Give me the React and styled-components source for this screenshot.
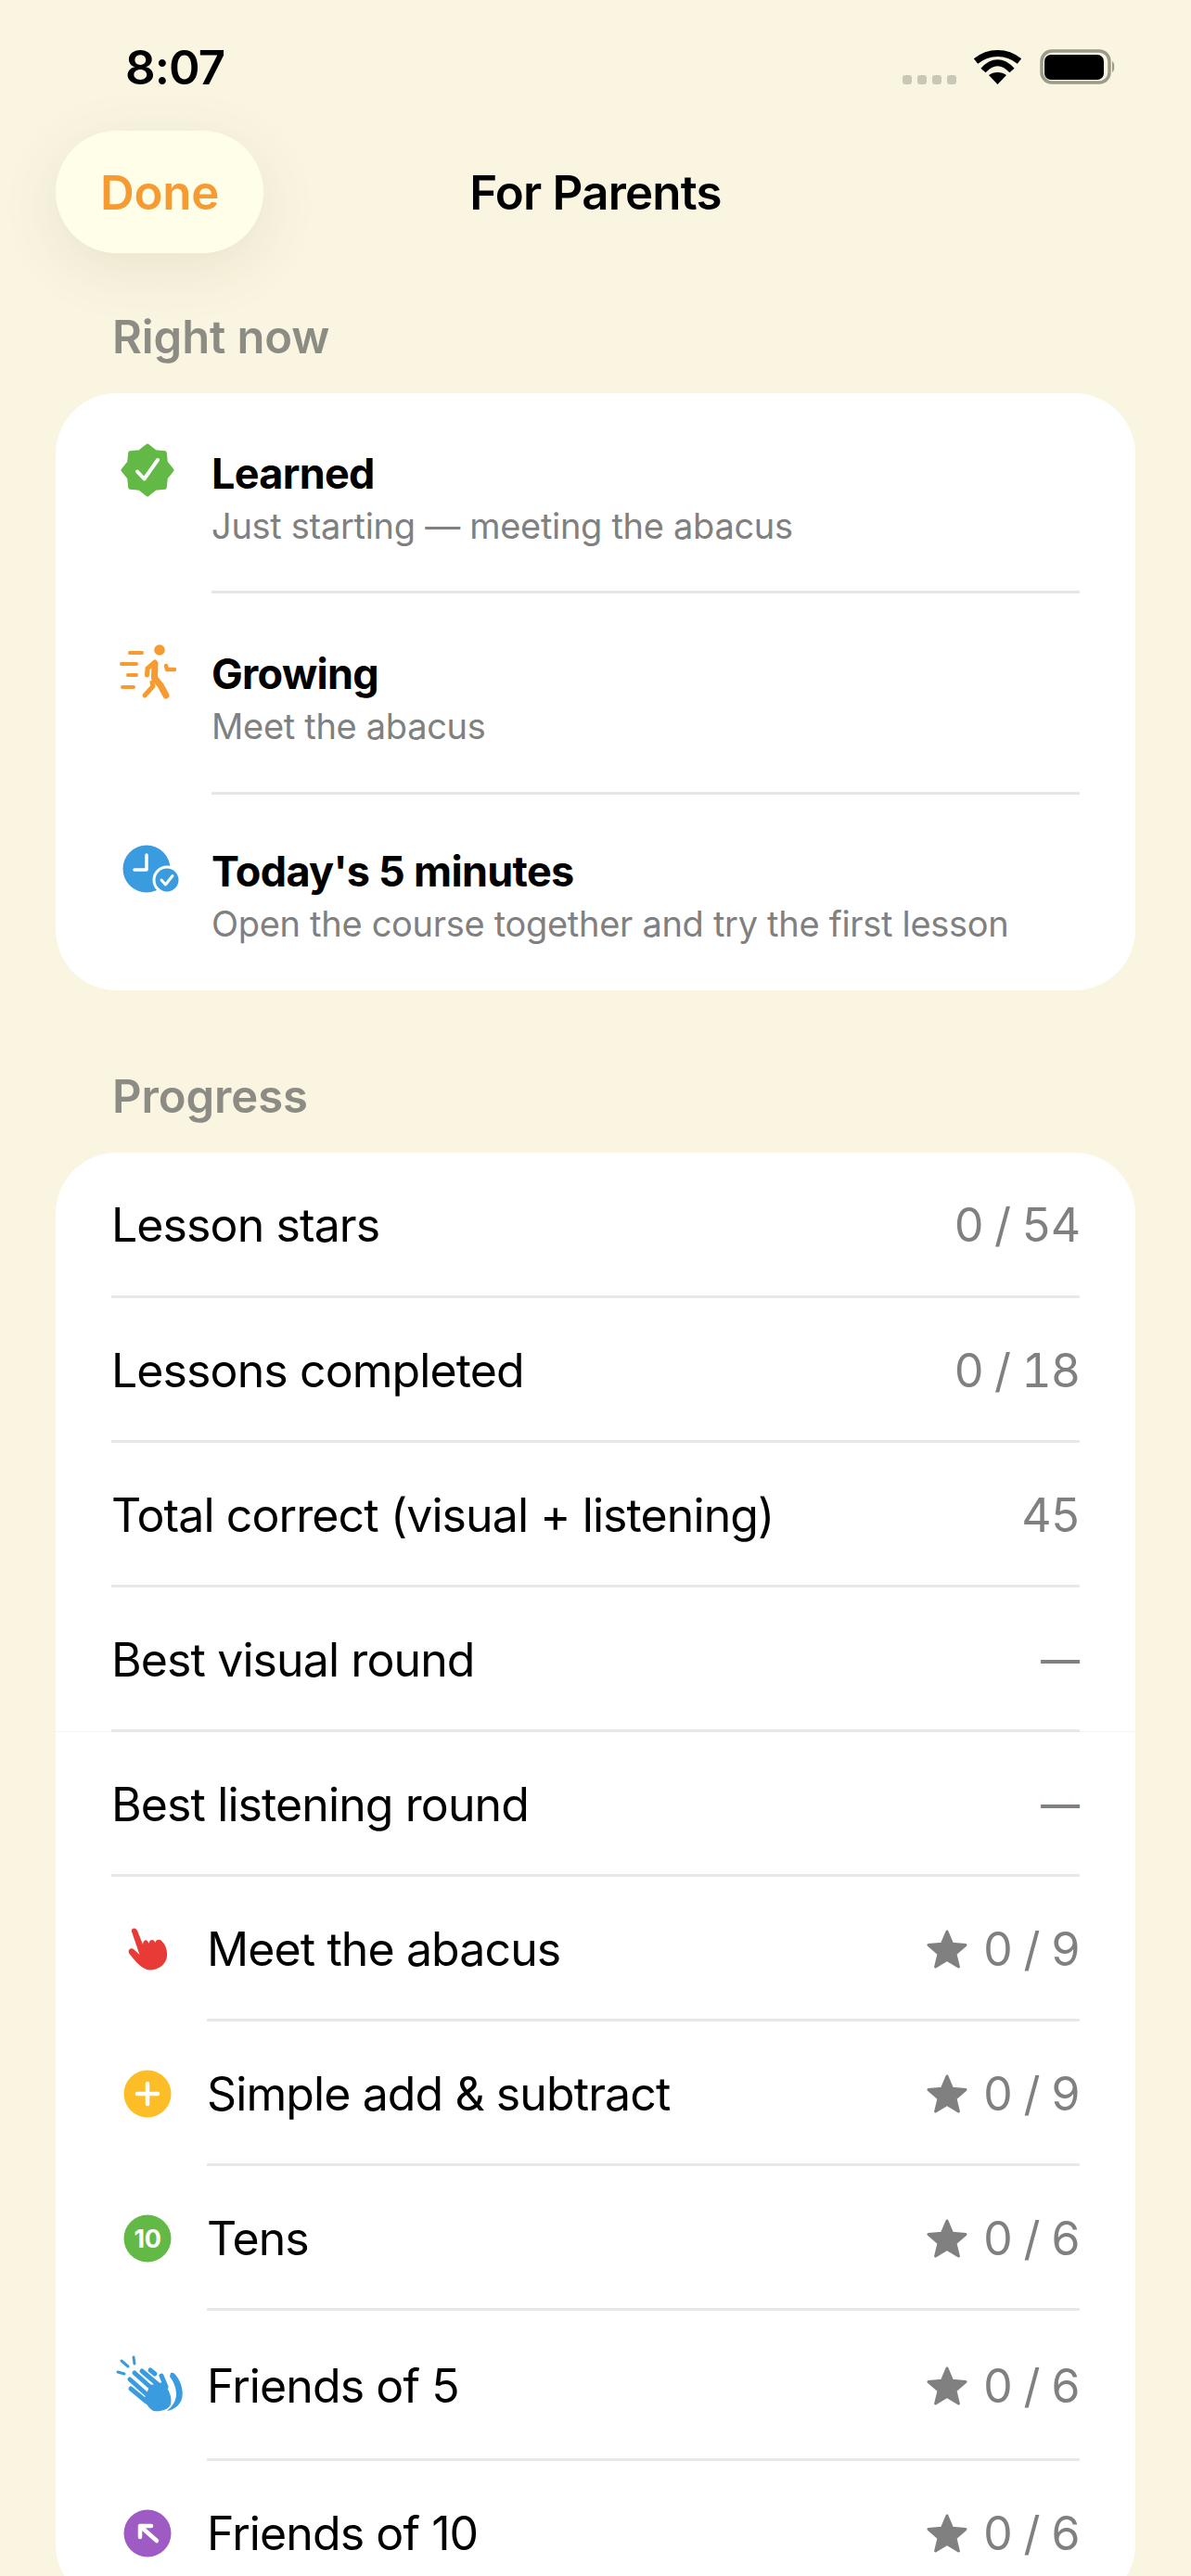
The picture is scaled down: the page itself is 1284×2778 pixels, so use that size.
import React from "react";
import styled, { createGlobalStyle } from "styled-components";

const Global = createGlobalStyle`
  html, body { margin: 0; padding: 0; background: #faf5e1; }
  * { box-sizing: border-box; }
`;

const Page = styled.div`
  width: 1284px;
  height: 2778px;
  overflow: hidden;
  background: #faf5e1;
  font-family: Inter, "Liberation Sans", sans-serif;
  color: #000;
`;

const StatusBar = styled.div`
  height: 141px;
  padding: 47px 82px 0 135px;
  display: flex;
  justify-content: space-between;
  align-items: flex-start;
`;

const Time = styled.div`
  font-size: 51px;
  font-weight: 600;
  line-height: 52px;
  letter-spacing: -0.9px;
`;

const StatusIcons = styled.svg`
  width: 232px;
  height: 45px;
  margin-top: 5px;
  display: block;
`;

const NavBar = styled.div`
  position: relative;
  height: 132px;
  display: flex;
  align-items: center;
  justify-content: center;
`;

const DoneButton = styled.button`
  position: absolute;
  left: 60px;
  top: 0;
  width: 224px;
  height: 132px;
  border: 0;
  border-radius: 66px;
  background: #fffee9;
  color: #f59b32;
  font: 600 51px Inter, "Liberation Sans", sans-serif;
  letter-spacing: -0.3px;
  box-shadow: 0 16px 64px rgba(90, 80, 30, 0.1);
  padding: 0;
`;

const NavTitle = styled.div`
  font-size: 51px;
  font-weight: 600;
  letter-spacing: -0.8px;
`;

const SectionTitle = styled.div`
  padding-left: 121px;
  font-size: 49px;
  font-weight: 600;
  line-height: 58px;
  letter-spacing: -0.1px;
  color: #8c8b84;
  margin-top: ${(p) => p.$top}px;
`;

const Card = styled.div`
  margin: 31px 60px 0;
  background: #fff;
  border-radius: 66px;
`;

const InfoRow = styled.div`
  display: flex;
  padding: 0 60px;
`;

const InfoIcon = styled.div`
  width: 108px;
  flex: none;
  padding-top: ${(p) => p.$iconTop}px;
  svg { display: block; width: 78px; height: 80px; }
`;

const InfoBody = styled.div`
  flex: 1;
  height: ${(p) => p.$height}px;
  padding-top: ${(p) => p.$pad}px;
  border-bottom: ${(p) => (p.$last ? "0" : "3px solid #e6e6e4")};
`;

const InfoTitle = styled.div`
  font-size: 45px;
  font-weight: 700;
  line-height: 54px;
  letter-spacing: -0.7px;
`;

const InfoSub = styled.div`
  font-size: 38px;
  line-height: 58px;
  color: #808080;
  letter-spacing: -0.3px;
`;

const Row = styled.div`
  position: relative;
  display: flex;
  padding: 0 60px;
  &::after {
    content: ${(p) => (p.$seam ? '""' : "none")};
    position: absolute;
    left: 0;
    right: 0;
    bottom: 0;
    height: 1px;
    background: #f8f5e6;
  }
`;

const RowIcon = styled.div`
  width: 103px;
  flex: none;
  display: flex;
  align-items: center;
  svg { display: block; width: 78px; height: 80px; }
`;

const RowBody = styled.div`
  position: relative;
  z-index: 1;
  flex: 1;
  height: ${(p) => p.$height || 156}px;
  padding-top: 2px;
  display: flex;
  align-items: center;
  justify-content: space-between;
  border-bottom: 3px solid #e8e8e6;
`;

const RowLabel = styled.div`
  font-size: 50px;
  letter-spacing: -0.9px;
`;

const RowValue = styled.div`
  display: flex;
  align-items: center;
  font-size: ${(p) => (p.$dash ? 42 : 50)}px;
  font-weight: ${(p) => (p.$dash ? 500 : 400)};
  font-variant-numeric: tabular-nums;
  color: #808080;
  letter-spacing: ${(p) => (p.$dash ? 0 : -1.1)}px;
  svg { width: 46px; height: 44px; margin-right: 16px; display: block; }
`;

const Green = () => {
  const pts = [];
  for (let i = 0; i < 16; i++) {
    const a = (Math.PI * i) / 8 - Math.PI / 2;
    const r = i % 2 === 0 ? 26.5 : 21.5;
    pts.push(`${39 + r * Math.cos(a)},${40 + r * Math.sin(a)}`);
  }
  return (
    <svg viewBox="0 0 78 80">
      <polygon points={pts.join(" ")} fill="#62b946" stroke="#62b946" strokeWidth="4" strokeLinejoin="round" />
      <path d="M28 41.5 L35.5 49.5 L50 29" fill="none" stroke="#fff" strokeWidth="4" strokeLinecap="round" strokeLinejoin="round" />
    </svg>
  );
};

const Runner = () => (
  <svg viewBox="0 0 78 80">
    <g fill="none" stroke="#f59b32" strokeLinecap="round" strokeLinejoin="round">
      <g strokeWidth="4">
        <path d="M20 19 H33" />
        <path d="M11 31 H27" />
        <path d="M18 43 H27" />
        <path d="M12 56 H24" />
      </g>
      <path d="M47 31 L46.5 46 L53 54 L59 65" strokeWidth="7" />
      <path d="M47 29 L39 36 L38.5 43" strokeWidth="5" />
      <path d="M44 51 L45 55 L36 65" strokeWidth="5" />
      <path d="M59 33 L60 37 L68 37" strokeWidth="4.5" />
    </g>
    <circle cx="52" cy="16" r="5.8" fill="#f59b32" />
  </svg>
);

const Clock = () => (
  <svg viewBox="0 0 78 80">
    <circle cx="38" cy="40" r="25.5" fill="#3a9bdf" />
    <path d="M38 25 V41 H25" fill="none" stroke="#fff" strokeWidth="3.5" strokeLinecap="round" strokeLinejoin="round" />
    <circle cx="60" cy="52" r="15.5" fill="#fff" />
    <circle cx="60" cy="52" r="12.5" fill="#3a9bdf" />
    <path d="M54 52 L58.5 57 L66 47.5" fill="none" stroke="#fff" strokeWidth="3" strokeLinecap="round" strokeLinejoin="round" />
  </svg>
);

const Hand = () => (
  <svg viewBox="0 0 78 80">
    <path
      transform="translate(0,-2)"
      d="M22 23 C21 19 26 18 28 22 L34 37 C34.5 31 39 31 40.5 36 C41 31 46 31 47.5 35 C48 31 53 31 55 34 C59 38 60.5 44 60 50 C59 59 50 64.5 42 64.5 C36 64.5 31 60 27 56 L19.5 47 C17 43 21 40 24 42 L30.5 48 Z"
      fill="#e83a36"
    />
  </svg>
);

const Plus = () => (
  <svg viewBox="0 0 78 80">
    <circle cx="39" cy="40" r="25.5" fill="#fdbd26" />
    <path d="M28 40 H50 M39 29 V51" stroke="#fff" strokeWidth="4.5" strokeLinecap="round" />
  </svg>
);

const Ten = () => (
  <svg viewBox="0 0 78 80">
    <circle cx="39" cy="40" r="25.5" fill="#62b946" />
    <text x="39" y="49.5" textAnchor="middle" fontFamily="Inter, sans-serif" fontWeight="700" fontSize="27" letterSpacing="-0.5" fill="#fff">10</text>
  </svg>
);

const Clap = () => (
  <svg viewBox="0 0 78 80" style={{ overflow: "visible" }}>
    <g transform="translate(0,-3)">
      <g fill="none" stroke="#3a9bdf" strokeLinecap="round" strokeLinejoin="round">
        <g strokeWidth="3">
          <path d="M11 16 L18 22" />
          <path d="M24 12 L25 19" />
          <path d="M7 28 L14 30" />
        </g>
        <g strokeWidth="5">
          <path d="M21 46 L38 60" />
          <path d="M20 36 L38 52" />
          <path d="M25 29 L44 46" />
          <path d="M33 27 L52 43" />
          <path d="M42 26 L47 30" />
          <path d="M54 32 L59 44" />
        </g>
      </g>
      <path d="M35 58 L42 42 L56 39 C62 47 66 55 64 63 C62 69 52 71 46 70 C42 69 39 64 35 58 Z" fill="#3a9bdf" />
      <path d="M64 29 C66 28 68 29 70 32 C76 40 78 50 76 57 C74 64 67 69 60 70 C66 65 70 59 70 52 C70 45 67 38 63 33 Z" fill="#3a9bdf" />
    </g>
  </svg>
);

const Arrow = () => (
  <svg viewBox="0 0 78 80">
    <circle cx="39" cy="40" r="25.5" fill="#9f5bc4" />
    <path d="M31 44 V32 H43 M32 33 L49 48" fill="none" stroke="#fff" strokeWidth="4.5" strokeLinecap="round" strokeLinejoin="round" />
  </svg>
);

const Star = () => (
  <svg viewBox="0 0 46 44">
    <path
      d="M23 3 L28.6 16.3 L43 17.5 L32 27 L35.4 41 L23 33.5 L10.6 41 L14 27 L3 17.5 L17.4 16.3 Z"
      fill="#808080"
      stroke="#808080"
      strokeWidth="3"
      strokeLinejoin="round"
    />
  </svg>
);

const infos = [
  { icon: <Green />, title: "Learned", sub: "Just starting — meeting the abacus", height: 216, pad: 60, iconTop: 43 },
  { icon: <Runner />, title: "Growing", sub: "Meet the abacus", height: 217, pad: 60, iconTop: 45 },
  { icon: <Clock />, title: "Today's 5 minutes", sub: "Open the course together and try the first lesson", height: 211, pad: 56, iconTop: 40, last: true },
];

const stats = [
  { label: "Lesson stars", value: "0 / 54", height: 157 },
  { label: "Lessons completed", value: "0 / 18" },
  { label: "Total correct (visual + listening)", value: "45" },
  { label: "Best visual round", value: "—", seam: true, dash: true },
  { label: "Best listening round", value: "—", dash: true },
];

const lessons = [
  { icon: <Hand />, label: "Meet the abacus", value: "0 / 9" },
  { icon: <Plus />, label: "Simple add & subtract", value: "0 / 9" },
  { icon: <Ten />, label: "Tens", value: "0 / 6" },
  { icon: <Clap />, label: "Friends of 5", value: "0 / 6", height: 162 },
  { icon: <Arrow />, label: "Friends of 10", value: "0 / 6" },
];

export default function App() {
  return (
    <Page>
      <Global />
      <StatusBar>
        <Time>8:07</Time>
        <StatusIcons viewBox="0 0 232 45">
          <g fill="#c9c8b6">
            <rect x="3" y="29" width="10" height="10" rx="3" />
            <rect x="19" y="29" width="10" height="10" rx="3" />
            <rect x="35" y="29" width="10" height="10" rx="3" />
            <rect x="51" y="29" width="10" height="10" rx="3" />
          </g>
          <path d="M82 14 C96 2.7 115 2.7 129 14" fill="none" stroke="#000" strokeWidth="7" />
          <path d="M90 24 C100 13 111 13 121 24" fill="none" stroke="#000" strokeWidth="7" />
          <path d="M96 29 C101 25 110 25 115 29 L105.5 39 Z" fill="#000" />
          <rect x="153" y="3" width="73" height="34" rx="11" fill="none" stroke="#9c9a8b" strokeWidth="3.5" />
          <rect x="156" y="7" width="64" height="27" rx="7" fill="#000" />
          <path d="M229 14 C232 15 232 25 229 26 Z" fill="#9c9a8b" />
        </StatusIcons>
      </StatusBar>
      <NavBar>
        <DoneButton>Done</DoneButton>
        <NavTitle>For Parents</NavTitle>
      </NavBar>
      <SectionTitle $top={62}>Right now</SectionTitle>
      <Card>
        {infos.map((it) => (
          <InfoRow key={it.title}>
            <InfoIcon $iconTop={it.iconTop}>{it.icon}</InfoIcon>
            <InfoBody $height={it.height} $pad={it.pad} $last={it.last}>
              <InfoTitle>{it.title}</InfoTitle>
              <InfoSub>{it.sub}</InfoSub>
            </InfoBody>
          </InfoRow>
        ))}
      </Card>
      <SectionTitle $top={86}>Progress</SectionTitle>
      <Card>
        {stats.map((s) => (
          <Row key={s.label} $seam={s.seam}>
            <RowBody $height={s.height}>
              <RowLabel>{s.label}</RowLabel>
              <RowValue $dash={s.dash}>{s.value}</RowValue>
            </RowBody>
          </Row>
        ))}
        {lessons.map((l) => (
          <Row key={l.label}>
            <RowIcon>{l.icon}</RowIcon>
            <RowBody $height={l.height}>
              <RowLabel>{l.label}</RowLabel>
              <RowValue>
                <Star />
                {l.value}
              </RowValue>
            </RowBody>
          </Row>
        ))}
      </Card>
    </Page>
  );
}
